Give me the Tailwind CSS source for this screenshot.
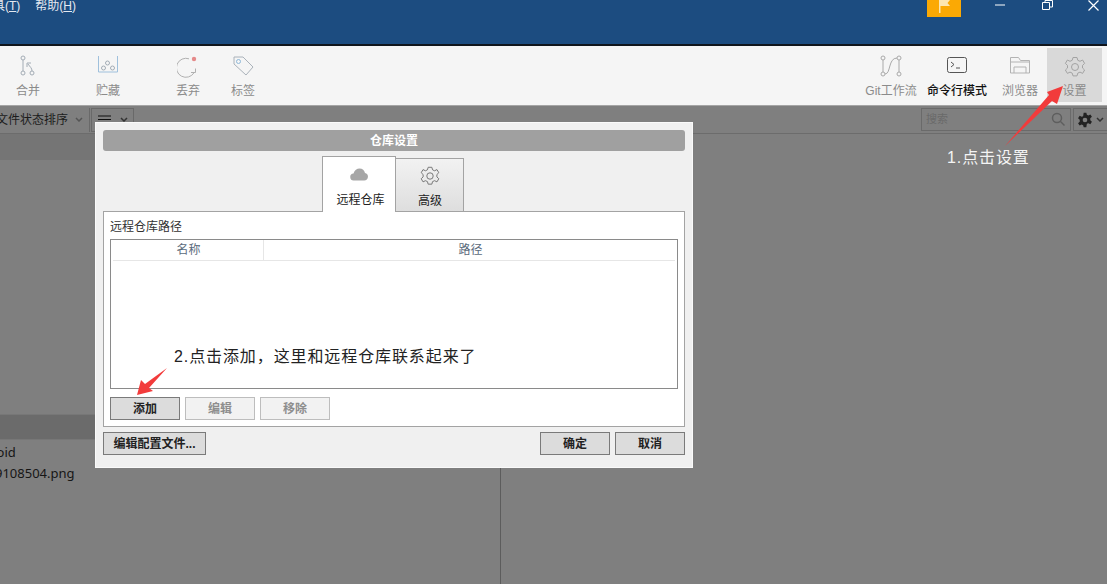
<!DOCTYPE html>
<html lang="zh-CN">
  <head>
    <meta charset="UTF-8" />
    <title>仓库设置</title>
    <script src="https://cdn.jsdelivr.net/npm/@tailwindcss/browser@4"></script>
  </head>
  <body class="w-[1107px] h-[584px] overflow-hidden relative bg-[#7f7f7f] text-[12px] font-['Liberation_Sans','Noto_Sans_CJK_SC',sans-serif]">
    <!-- title bar -->
    <header class="h-[46px] bg-[#1c4c80] border-b-2 border-[#10151c] flex justify-between text-white relative">
      <div class="flex gap-[15px] h-[11px] items-center text-[12px] text-[#e4e9f0] -ml-[7px]">
        <span>具(<u>T</u>)</span>
        <span>帮助(<u>H</u>)</span>
      </div>
      <div class="flex items-start h-[17px]">
        <div class="w-[34px] h-[17px] bg-[#fba904] flex justify-center mr-[24px]">
          <svg width="12" height="13" viewBox="0 0 12 13"><path d="M1 0h1.500v13H1z M2.500 0H12L9.500 3 12 6H2.500z" fill="#fde6b0" /></svg>
        </div>
        <div class="w-[30px] flex justify-center pt-[4px]">
          <svg width="10" height="2"><path d="M0 1h10" stroke="#fff" /></svg>
        </div>
        <div class="w-[64px] flex justify-center">
          <svg width="11" height="10" viewBox="0 0 11 10" fill="none" stroke="#fff"><path d="M.5 2.500h7v7h-7z M3 2.500V.5h7.500v6.500h-3" /></svg>
        </div>
        <div class="w-[28px] flex justify-center">
          <svg width="11" height="11" viewBox="0 0 11 11" stroke="#fff" stroke-width="1.200"><path d="M.5.500l10 10M10.500.500l-10 10" /></svg>
        </div>
      </div>
    </header>

    <!-- toolbar -->
    <nav class="h-[60px] bg-[#f5f5f5] border-b border-[#a5a5a5] flex justify-between text-[#8b8b8b]">
      <div class="flex">
        <div class="w-[56px] h-[60px] flex flex-col items-center pt-[8px]">
          <svg width="20" height="24" viewBox="0 0 20 24" fill="none" stroke="#a3acb5"><circle cx="5" cy="4" r="2" /><circle cx="5" cy="19" r="2" /><circle cx="14" cy="19" r="2" /><path d="M5 6v11M14 17c0-3-2-4-4-7M9 13v-4h4" /></svg>
          <span class="mt-[6px] leading-[14px]">合并</span>
        </div>
        <div class="ml-[24px] w-[56px] h-[60px] flex flex-col items-center pt-[8px]">
          <svg width="22" height="24" viewBox="0 0 22 24" fill="none" stroke="#9fc0dc"><path d="M1.500 2v16h19V2" /><circle cx="10.500" cy="9" r="2" stroke="#a3acb5" /><circle cx="6.500" cy="14" r="2" stroke="#a3acb5" /><circle cx="15.500" cy="14" r="2" stroke="#a3acb5" /></svg>
          <span class="mt-[6px] leading-[14px]">贮藏</span>
        </div>
        <div class="ml-[24px] w-[56px] h-[60px] flex flex-col items-center pt-[8px]">
          <svg width="22" height="24" viewBox="0 0 22 24" fill="none" stroke="#b0b0b0"><path d="M12 4.800a9.500 9.500 0 1 0 5 14" /><path d="M14 18.500h4.500v-4" /><circle cx="17" cy="5" r="2.200" fill="#e58a8a" stroke="none" /></svg>
          <span class="mt-[6px] leading-[14px]">丢弃</span>
        </div>
        <div class="ml-[-1px] w-[56px] h-[60px] flex flex-col items-center pt-[8px]">
          <svg width="24" height="24" viewBox="0 0 24 24" fill="none" stroke="#aab2ba"><path d="M3 3h9l10 10-7 8L3 10z" /><circle cx="7.500" cy="7.500" r="2" stroke="#8fb8d8" /></svg>
          <span class="mt-[6px] leading-[14px]">标签</span>
        </div>
      </div>
      <div class="flex pr-[5px]">
        <div class="w-[60px] flex flex-col items-center pt-[8px]">
          <svg width="24" height="24" viewBox="0 0 24 24" fill="none" stroke="#a9a9a9"><circle cx="4" cy="4" r="2" /><circle cx="20" cy="4" r="2" /><circle cx="4" cy="20" r="2" /><circle cx="20" cy="20" r="2" /><path d="M4 6v12M20 6v12M6 20c6 0 3-16 12-16" /></svg>
          <span class="mt-[6px] leading-[14px] whitespace-nowrap">Git工作流</span>
        </div>
        <div class="w-[72px] flex flex-col items-center pt-[8px] text-[#111]">
          <svg width="22" height="24" viewBox="0 0 22 24" fill="none" stroke="#555"><rect x="1.500" y="3.500" width="19" height="15" rx="2" /><path d="M5 8l3 2.500L5 13M10 14h4" /></svg>
          <span class="mt-[6px] leading-[14px] whitespace-nowrap font-medium">命令行模式</span>
        </div>
        <div class="w-[54px] flex flex-col items-center pt-[8px]">
          <svg width="22" height="24" viewBox="0 0 22 24" fill="none" stroke="#b3b3b3"><path d="M1.500 19V3.500h8l2 3h9V19z M5 19v-6h12v6 M1.500 8h19" /></svg>
          <span class="mt-[6px] leading-[14px]">浏览器</span>
        </div>
        <div class="w-[55px] h-[54px] mt-[2px] bg-[#d9d9d9] flex flex-col items-center pt-[7px]">
          <svg width="24" height="24" viewBox="0 0 24 24" fill="none" stroke="#a3a3a3"><path d="M10 2.500h4l.8 2.800 2.200 1 2.600-1.300 2 3.400-2.100 2 0 2.600 2.100 2-2 3.400-2.600-1.300-2.200 1-.8 2.800h-4l-.8-2.800-2.200-1-2.600 1.300-2-3.400 2.100-2 0-2.600-2.100-2 2-3.400 2.600 1.300 2.200-1z" /><circle cx="12" cy="12" r="3.500" /></svg>
          <span class="mt-[5px] leading-[14px]">设置</span>
        </div>
      </div>
    </nav>

    <!-- filter row -->
    <div class="h-[28px] border-b border-[#6c6c6c] flex justify-between text-[#1c1c1c]">
      <div class="flex items-center h-[27px]">
        <div class="w-[90px] h-[24px] border-r border-[#696969] flex items-center justify-between pr-[6px] whitespace-nowrap overflow-hidden">
          <span class="-ml-[4px]">文件状态排序</span>
          <svg width="8" height="5" viewBox="0 0 8 5" fill="none" stroke="#555" stroke-width="1.500"><path d="M1 1l3 3 3-3" /></svg>
        </div>
        <div class="w-[43px] h-[24px] ml-[1px] border border-[#696969] flex items-center gap-[9px] pl-[6px]">
          <svg width="13" height="9"><path d="M0 1h13M0 4.500h13M0 8h13" stroke="#111" stroke-width="1.200" /></svg>
          <svg width="8" height="5" viewBox="0 0 8 5" fill="none" stroke="#333" stroke-width="1.500"><path d="M1 1l3 3 3-3" /></svg>
        </div>
      </div>
      <div class="flex items-center h-[27px]">
        <div class="w-[150px] h-[23px] border border-[#6a6a6a] flex items-center justify-between px-[4px] text-[#6a6a6a] text-[11px]">
          <span>搜索</span>
          <svg width="15" height="15" viewBox="0 0 15 15" fill="none" stroke="#5e5e5e" stroke-width="1.500"><circle cx="6" cy="6" r="4.500" /><path d="M9.500 9.500l4 4" /></svg>
        </div>
        <div class="w-[34px] h-[23px] ml-[2px] border border-r-0 border-[#6a6a6a] flex items-center pl-[3px] gap-[3px]">
          <svg width="16" height="16" viewBox="0 0 24 24" fill="#222"><path fill-rule="evenodd" d="M10 1h4l.8 3.300 2.200 1 3-1.600 2.400 3.500-2.500 2.300v3l2.500 2.300-2.400 3.500-3-1.600-2.200 1L14 23h-4l-.8-3.300-2.200-1-3 1.600-2.400-3.500L4.100 14.500v-3L1.600 9.200 4 5.700l3 1.600 2.200-1zM12 8.500a3.500 3.500 0 1 0 0 7 3.500 3.500 0 0 0 0-7z" /></svg>
          <svg width="8" height="5" viewBox="0 0 8 5" fill="none" stroke="#333" stroke-width="1.500"><path d="M1 1l3 3 3-3" /></svg>
        </div>
      </div>
    </div>

    <!-- workspace -->
    <div class="h-[450px] flex">
      <div class="w-[501px] border-r border-[#5c5c5c] flex flex-col">
        <div class="h-[26px] bg-[#757575]"></div>
        <div class="h-[254px]"></div>
        <div class="h-[26px] bg-[#6b6b6b] border-y border-[#777]"></div>
        <div class="pt-[2px] leading-[21px] text-[13px] text-[#161616] whitespace-nowrap font-['Noto_Sans','Noto_Sans_CJK_SC',sans-serif]">
          <div class="-ml-[10px]">void</div>
          <div class="-ml-[5px]">9108504.png</div>
        </div>
      </div>
      <div class="flex-1"></div>
    </div>

    <!-- settings dialog -->
    <section class="absolute left-[95px] top-[122px] w-[598px] h-[346px] bg-[#f0f0f0] border border-[#fafafa] px-[7px] pt-[7px] flex flex-col">
      <div class="h-[21px] rounded-[3px] bg-[#a0a0a0] text-white font-bold flex items-center justify-center">仓库设置</div>
      <div class="h-[61px] flex justify-center items-end -mb-px z-10 pr-[2px]">
        <div class="w-[74px] h-[56px] bg-white border border-b-0 border-[#a3a3a3] flex flex-col items-center pt-[11px] text-[#222]">
          <svg width="18" height="13" viewBox="0 0 18 13"><path d="M4 12.500a3.500 3.500 0 0 1-.5-7C4.500 2 7 .5 9.500.5c3 0 5 2 5.500 4.500a3.800 3.800 0 0 1-.8 7.500z" fill="#a6a6a6" /></svg>
          <span class="mt-[11px] leading-[16px] pl-[3px]">远程仓库</span>
        </div>
        <div class="w-[68px] h-[54px] bg-gradient-to-b from-[#f2f2f2] to-[#dedede] border border-[#a3a3a3] border-l-0 flex flex-col items-center pt-[6px] text-[#222]">
          <svg width="22" height="22" viewBox="0 0 24 24" fill="none" stroke="#6e6e6e"><path d="M10 2.500h4l.8 2.800 2.200 1 2.600-1.300 2 3.400-2.100 2 0 2.600 2.100 2-2 3.400-2.600-1.300-2.200 1-.8 2.800h-4l-.8-2.800-2.200-1-2.600 1.300-2-3.400 2.100-2 0-2.600-2.100-2 2-3.400 2.600 1.300 2.200-1z" /><circle cx="12" cy="12" r="3.500" /></svg>
          <span class="mt-[6px] leading-[16px] pl-[1px]">高级</span>
        </div>
      </div>
      <div class="h-[216px] bg-white border border-[#a3a3a3] px-[6px] flex flex-col">
        <div class="h-[27px] leading-[31px] text-[#333]">远程仓库路径</div>
        <div class="h-[150px] border border-[#8a8a8a] px-[2px]">
          <div class="h-[21px] flex border-b border-[#e6e6e6] text-[#5b6b7c]">
            <div class="w-[151px] border-r border-[#e6e6e6] text-center leading-[21px] pl-[1px]">名称</div>
            <div class="flex-1 text-center leading-[21px] pl-[2px]">路径</div>
          </div>
        </div>
        <div class="flex gap-[5px] mt-[8px]">
          <button class="w-[70px] h-[23px] bg-[#dcdcdc] border border-[#7a7a7a] font-bold text-[#222]">添加</button>
          <button class="w-[70px] h-[23px] bg-[#f2f2f2] border border-[#bdbdbd] font-bold text-[#8e8e8e]">编辑</button>
          <button class="w-[70px] h-[23px] bg-[#f2f2f2] border border-[#bdbdbd] font-bold text-[#8e8e8e]">移除</button>
        </div>
      </div>
      <div class="flex justify-between mt-[5px]">
        <button class="w-[103px] h-[23px] bg-[#dcdcdc] border border-[#7a7a7a] font-bold text-[#222] whitespace-nowrap">编辑配置文件...</button>
        <div class="flex gap-[5px]">
          <button class="w-[70px] h-[23px] bg-[#dcdcdc] border border-[#7a7a7a] font-bold text-[#222]">确定</button>
          <button class="w-[70px] h-[23px] bg-[#dcdcdc] border border-[#7a7a7a] font-bold text-[#222]">取消</button>
        </div>
      </div>
    </section>

    <!-- annotations -->
    <div class="absolute left-[947px] top-[148px] text-[16px] leading-[20px] text-[#f4f4f4] tracking-[0.9px] whitespace-nowrap">1.点击设置</div>
    <div class="absolute left-[174px] top-[347px] text-[16px] leading-[20px] text-[#222] tracking-[0.9px] whitespace-nowrap">2.点击添加，这里和远程仓库联系起来了</div>
    <svg class="absolute left-0 top-0 pointer-events-none" width="1107" height="584">
      <path d="M1005 146L1052 101L1057 104L1063 86L1047 92L1049 95z" fill="#f23b3b" />
      <path d="M167 368L149 388L153 391L137 395L141 380L145 384z" fill="#f23b3b" />
    </svg>
  </body>
</html>
